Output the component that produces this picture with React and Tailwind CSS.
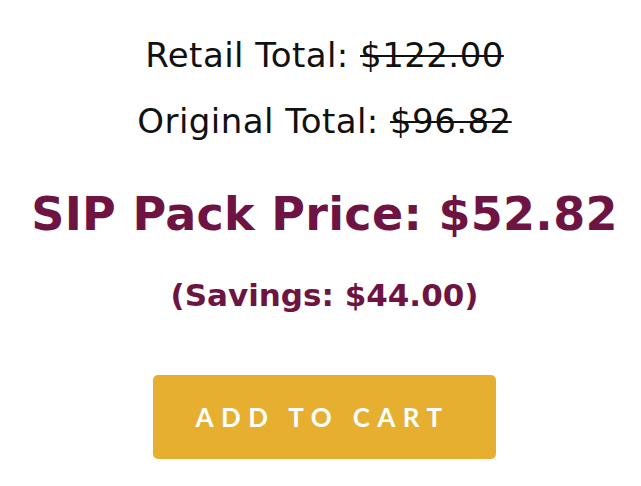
export default function App() {
  return (
    <div className="w-[641px] h-[486px] bg-white flex flex-col items-center pl-[8px]" style={{ fontFamily: "'DejaVu Sans', sans-serif" }}>
      {/* totals */}
      <div className="mt-[35px] flex flex-col items-center text-[#111] text-[34px] leading-[40px] tracking-[0.45px]">
        <p>
          Retail Total: <span className="line-through decoration-2">$122.00</span>
        </p>
        <p className="mt-[26px]">
          Original Total: <span className="line-through decoration-2">$96.82</span>
        </p>
      </div>

      <h2 className="mt-[46px] text-[#6e1443] text-[46px] leading-[54px] font-bold tracking-[0.3px]">
        SIP Pack Price: $52.82
      </h2>

      <p className="mt-[36px] text-[#6e1443] text-[31px] leading-[36px] font-bold">
        (Savings: $44.00)
      </p>

      <button
        className="mt-[62px] w-[343px] h-[84px] rounded-[5px] bg-[#e6af2f] text-white text-[26px] font-bold tracking-[7.4px] pr-[4px]"
        style={{ fontFamily: "Lato, sans-serif" }}
      >
        ADD TO CART
      </button>
    </div>
  );
}
